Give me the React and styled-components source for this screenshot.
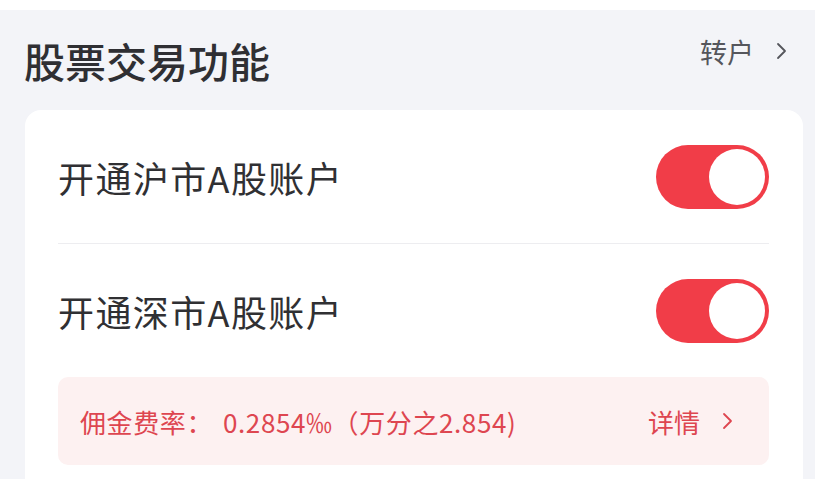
import React, { useState } from 'react';
import styled, { createGlobalStyle } from 'styled-components';

const GlobalStyle = createGlobalStyle`
  html, body {
    margin: 0;
    padding: 0;
    background: #f3f4f8;
    font-family: "Noto Sans CJK SC", "Noto Sans", sans-serif;
  }
`;

const Page = styled.div`
  width: 815px;
  height: 479px;
  overflow: hidden;
  display: flex;
  flex-direction: column;
`;

const TopStrip = styled.div`
  height: 10px;
  background: #ffffff;
`;

const Header = styled.div`
  height: 100px;
  display: flex;
  align-items: center;
  justify-content: space-between;
  padding: 0 28px 0 24px;
`;

const Title = styled.h1`
  margin: 0;
  font-size: 41px;
  font-weight: 500;
  color: #2f2f33;
`;

const HeaderLink = styled.a`
  display: flex;
  align-items: center;
  gap: 22px;
  margin-bottom: 18px;
  font-size: 27px;
  color: #55565c;
  text-decoration: none;
`;

const Card = styled.div`
  flex: 1;
  margin: 0 12px 0 25px;
  padding: 0 34px 13px 33px;
  background: #ffffff;
  border-radius: 16px 16px 0 0;
  display: flex;
  flex-direction: column;
`;

const Row = styled.div`
  display: flex;
  align-items: center;
  justify-content: space-between;
  padding: 35px 0 34px;
  border-bottom: ${(p) => (p.$divider ? '1px solid #ededf0' : 'none')};
`;

const RowLabel = styled.span`
  font-size: 36px;
  letter-spacing: 1.4px;
  color: #303033;
`;

const Track = styled.button`
  width: 113px;
  height: 64px;
  border: none;
  padding: 4px;
  border-radius: 32px;
  background: ${(p) => (p.$on ? '#f13d48' : '#dcdce0')};
  display: flex;
  justify-content: ${(p) => (p.$on ? 'flex-end' : 'flex-start')};
  cursor: pointer;
`;

const Knob = styled.span`
  width: 56px;
  height: 56px;
  border-radius: 50%;
  background: #ffffff;
`;

const FeeBox = styled.div`
  height: 88px;
  display: flex;
  align-items: center;
  justify-content: space-between;
  padding: 0 36px 0 22px;
  background: #fdf1f1;
  border-radius: 10px;
  color: #de4650;
  font-size: 26px;
`;

const FeeText = styled.span`
  letter-spacing: 0.6px;
`;

const Colon = styled.span`
  margin-right: 10px;
`;

const DetailLink = styled.a`
  display: flex;
  align-items: center;
  gap: 22px;
  color: #de4650;
  text-decoration: none;
`;

function Chevron({ color }) {
  return (
    <svg width="11" height="18" viewBox="0 0 11 18" fill="none">
      <polyline points="2,2 9,9 2,16" stroke={color} strokeWidth="1.8" strokeLinecap="round" strokeLinejoin="round" />
    </svg>
  );
}

function Toggle({ on, onClick }) {
  return (
    <Track $on={on} onClick={onClick}>
      <Knob />
    </Track>
  );
}

export default function App() {
  const [accounts, setAccounts] = useState([
    { name: '开通沪市A股账户', on: true },
    { name: '开通深市A股账户', on: true },
  ]);

  const flip = (i) =>
    setAccounts((list) => list.map((a, j) => (j === i ? { ...a, on: !a.on } : a)));

  return (
    <Page>
      <GlobalStyle />
      <TopStrip />
      <Header>
        <Title>股票交易功能</Title>
        <HeaderLink href="#">
          转户
          <Chevron color="#55565c" />
        </HeaderLink>
      </Header>
      <Card>
        {accounts.map((a, i) => (
          <Row key={a.name} $divider={i < accounts.length - 1}>
            <RowLabel>{a.name}</RowLabel>
            <Toggle on={a.on} onClick={() => flip(i)} />
          </Row>
        ))}
        <FeeBox>
          <FeeText>
            佣金费率<Colon>：</Colon>0.2854‰（万分之2.854)
          </FeeText>
          <DetailLink href="#">
            详情
            <Chevron color="#de4650" />
          </DetailLink>
        </FeeBox>
      </Card>
    </Page>
  );
}
